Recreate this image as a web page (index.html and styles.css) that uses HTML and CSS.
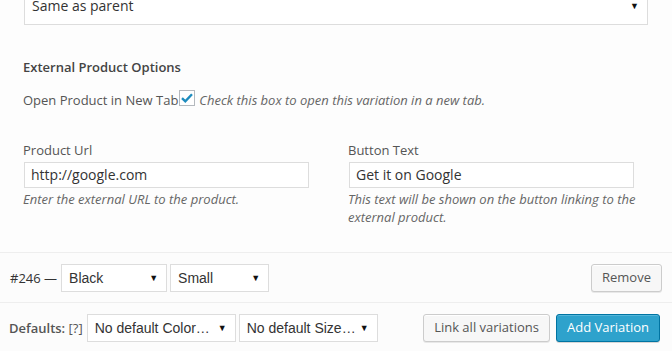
FILE: index.html
```html
<!DOCTYPE html>
<html lang="en">
<head>
    <meta charset="UTF-8">
    <title>Variation</title>
    <link rel="stylesheet" href="styles.css">
</head>
<body>
    <div class="variation-body">
        <div class="fake-select wide">
            <span>Same as parent</span>
            <span class="arrow">&#9660;</span>
        </div>

        <h4 class="section-title">External Product Options</h4>

        <p class="check-row">
            <span class="check-label">Open Product in New Tab</span>
            <span class="checkbox">
                <svg width="12" height="10" viewBox="0 0 12 10"><path d="M1 5.2 L4.3 8.3 L11 1.2" fill="none" stroke="#1e8cbe" stroke-width="2.4"/></svg>
            </span>
            <em class="desc">Check this box to open this variation in a new tab.</em>
        </p>

        <div class="fields">
            <div class="field">
                <label>Product Url</label>
                <div class="text-input">http://google.com</div>
                <em class="desc">Enter the external URL to the product.</em>
            </div>
            <div class="field">
                <label>Button Text</label>
                <div class="text-input">Get it on Google</div>
                <em class="desc">This text will be shown on the button linking to the external product.</em>
            </div>
        </div>
    </div>

    <div class="bar variation-row">
        <strong class="var-id">#246 &mdash;</strong>
        <div class="fake-select native" style="width: 106px">
            <span>Black</span><span class="arrow">&#9660;</span>
        </div>
        <div class="fake-select native" style="width: 99px">
            <span>Small</span><span class="arrow">&#9660;</span>
        </div>
        <button class="btn remove">Remove</button>
    </div>

    <div class="bar toolbar">
        <strong class="defaults">Defaults: <span class="tips">[?]</span></strong>
        <div class="fake-select native" style="width: 149px">
            <span>No default Color&hellip;</span><span class="arrow">&#9660;</span>
        </div>
        <div class="fake-select native" style="width: 139px">
            <span>No default Size&hellip;</span><span class="arrow">&#9660;</span>
        </div>
        <div class="actions">
            <button class="btn">Link all variations</button>
            <button class="btn primary">Add Variation</button>
        </div>
    </div>
</body>
</html>
```

FILE: styles.css
```css
body {
    margin: 0;
    font-family: "Open Sans", sans-serif;
    font-size: 13px;
    color: #444;
    background-color: #fdfdfd;
    overflow: hidden;
}
.variation-body {
    display: flow-root;
    padding: 0 24px 0 23px;
    height: 253px;
    border-bottom: 1px solid #eee;
    box-sizing: border-box;
}
.fake-select {
    display: flex;
    align-items: center;
    justify-content: space-between;
    box-sizing: border-box;
    height: 28px;
    padding: 0 8px 0 7px;
    background-color: #fff;
    border: 1px solid #ddd;
    color: #333;
}
.fake-select .arrow {
    font-size: 9px;
    color: #111;
}
.wide {
    height: 39px;
    margin: -14px 0 0 1px;
    font-size: 14px;
}
.native {
    font-family: "Liberation Sans", Arial, sans-serif;
    font-size: 14px;
    height: 28px;
    padding: 0 8px 0 7px;
}
.section-title {
    margin: 32px 0 0;
    font-size: 13px;
    font-weight: 600;
    color: #444;
    line-height: 20px;
}
.check-row {
    display: flex;
    align-items: center;
    margin: 13px 0 0;
    line-height: 20px;
    color: #555;
}
.checkbox {
    display: flex;
    align-items: center;
    justify-content: center;
    width: 16px;
    height: 16px;
    box-sizing: border-box;
    border: 1px solid #b4b9be;
    background-color: #fff;
    margin: -5px 4px 0 1px;
}
.desc {
    color: #666;
    line-height: 18px;
}
.fields {
    display: grid;
    grid-template-columns: 300px 300px;
    column-gap: 25px;
    margin-top: 30px;
}
.field label {
    display: block;
    line-height: 20px;
    color: #555;
}
.text-input {
    box-sizing: border-box;
    width: 285px;
    height: 26px;
    margin: 2px 0 2px 1px;
    padding: 0 6px;
    border: 1px solid #ddd;
    background-color: #fff;
    font-size: 14px;
    line-height: 24px;
    color: #333;
}
.bar {
    display: flex;
    align-items: center;
    background-color: #fcfcfc;
    box-sizing: border-box;
}
.variation-row {
    height: 50px;
    padding: 0 10px 0 10px;
    border-bottom: 1px solid #eee;
    gap: 3px;
}
.var-id {
    font-weight: 400;
    color: #333;
    margin-right: 1px;
}
.remove {
    margin-left: auto;
}
.toolbar {
    height: 49px;
    padding: 0 12px 0 9px;
    gap: 3px;
}
.defaults {
    font-weight: 600;
    color: #555;
    margin-right: 1px;
}
.tips {
    font-weight: 400;
}
.actions {
    display: flex;
    gap: 6px;
    margin-left: auto;
}
.btn {
    font-family: "Open Sans", sans-serif;
    font-size: 13px;
    height: 28px;
    padding: 0 10px 1px;
    border: 1px solid #ccc;
    border-radius: 3px;
    background-color: #f7f7f7;
    color: #555;
    box-shadow: inset 0 1px 0 #fff, 0 1px 0 rgba(0, 0, 0, 0.08);
}
.primary {
    background-color: #2ea2cc;
    border-color: #0074a2;
    color: #fff;
    box-shadow: inset 0 1px 0 rgba(120, 200, 230, 0.5), 0 1px 0 rgba(0, 0, 0, 0.15);
}
```
